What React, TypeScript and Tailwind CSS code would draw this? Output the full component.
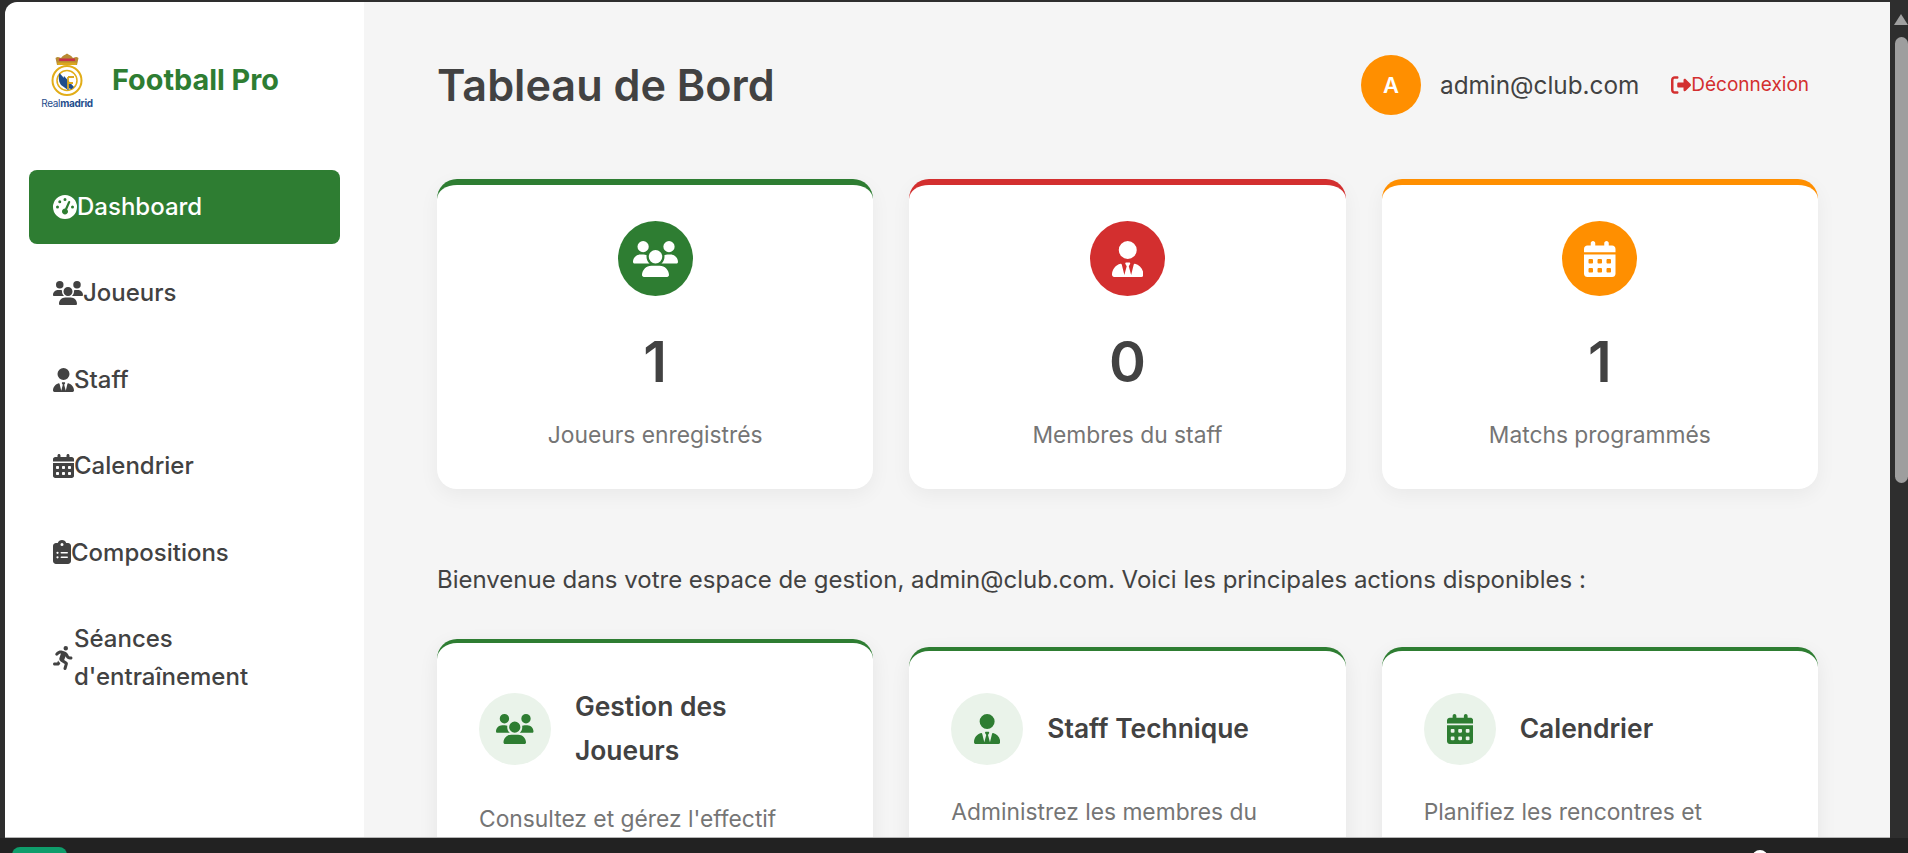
import { FaGaugeHigh, FaUsers, FaUserTie, FaCalendarDays, FaClipboardList, FaPersonRunning, FaRightFromBracket } from "react-icons/fa6";

const nav = [
  { icon: FaUsers, label: "Joueurs", size: "h-[24px] w-[30px]" },
  { icon: FaUserTie, label: "Staff", size: "h-[24px] w-[21px]" },
  { icon: FaCalendarDays, label: "Calendrier", size: "h-[24px] w-[21px]" },
  { icon: FaClipboardList, label: "Compositions", size: "h-[24px] w-[18px]" },
  { icon: FaPersonRunning, label: "Séances d'entraînement", size: "h-[24px] w-[21px]" },
];

function Crest() {
  return (
    <svg viewBox="0 0 56 44" className="h-[44px] w-[56px] shrink-0">
      <path d="M18 13 L16.5 6 C19 4 21 6 22 6 C24 3 26 3 28 1.5 C30 3 32 3 34 6 C35 6 37 4 39.5 6 L38 13 Z" fill="#b98a33" />
      <rect x="20" y="6.5" width="16" height="2.5" fill="#c8304a" />
      <rect x="18.5" y="10.5" width="19" height="2.5" fill="#dca81e" />
      <circle cx="28" cy="28.5" r="14.5" fill="#ffffff" stroke="#e2ad18" strokeWidth="2" />
      <circle cx="28" cy="28.5" r="10" fill="#ffffff" stroke="#e2ad18" strokeWidth="1.5" />
      <path d="M20.5 21 C19 26 20 30 22 33 L29 38 L32 35 L24 25 Z" fill="#1f4d8c" />
      <path d="M25 24 L35 35 L32 37.5 L24 28 Z" fill="#1f4d8c" />
      <path d="M29 25 H35 M29 25 V37 M29 31 H34" stroke="#dca81e" strokeWidth="1.8" fill="none" />
    </svg>
  );
}

function StatCard({ icon: Icon, size, value, label, border, bg }: { icon: any; size: string; value: string; label: string; border: string; bg: string }) {
  return (
    <div className={`flex h-[310px] flex-col items-center rounded-[20px] border-t-[6px] bg-white pt-[36px] shadow-[0_6px_20px_rgba(0,0,0,0.05)] ${border}`}>
      <div className={`flex h-[75px] w-[75px] items-center justify-center rounded-full text-white ${bg}`}>
        <Icon className={size} />
      </div>
      <div className="mt-[26px] text-[56px] leading-[80px] font-semibold text-[#424242]">{value}</div>
      <div className="mt-[14px] text-[22.8px] leading-[37px] text-[#757575]">{label}</div>
    </div>
  );
}

function ActionCard({ icon: Icon, size, title, text }: { icon: any; size: string; title: string; text: string }) {
  return (
    <div className="rounded-[20px] border-t-[4px] border-[#2e7d32] bg-white px-[42px] pt-[42px] pb-[42px] shadow-[0_6px_20px_rgba(0,0,0,0.07)]">
      <div className="flex items-center gap-[24px]">
        <div className="flex h-[72px] w-[72px] shrink-0 items-center justify-center rounded-full bg-[#eaf3ea] text-[#2e7d32]">
          <Icon className={size} />
        </div>
        <h3 className="text-[26.4px] leading-[43.5px] font-semibold text-[#424242]">{title}</h3>
      </div>
      <p className="mt-[28px] text-[22.8px] leading-[37px] text-[#757575]">{text}</p>
    </div>
  );
}

export default function App() {
  return (
    <div className="flex h-[853px] w-[1908px] flex-col overflow-hidden bg-[#2e2e2e] font-['Inter',sans-serif]">
      <div className="flex min-h-0 flex-1 pt-[2px] pl-[5px]">
        <div className="flex min-w-0 flex-1 overflow-hidden rounded-tl-[12px] border-b border-[#b5b5b5]">
          <aside className="flex w-[359px] shrink-0 flex-col bg-white px-[24px] shadow-[2px_0_8px_rgba(0,60,0,0.05)]">
            <div className="mt-[50px] flex items-center gap-[17px] pl-[10px]">
              <div className="flex w-[56px] flex-col items-center">
                <Crest />
                <div className="mt-[1px] text-[10px] leading-[13px] tracking-[-0.3px] text-[#1f4d8c]">
                  Real<b>madrid</b>
                </div>
              </div>
              <div className="mb-[2px] text-[28.8px] leading-[46px] font-bold text-[#2e7d32]">Football Pro</div>
            </div>
            <nav className="mt-[60px] flex flex-col gap-[12.8px]">
              <a className="flex items-center rounded-[8px] bg-[#2e7d32] px-[24px] py-[18px] text-[24px] leading-[37.6px] font-medium text-white">
                <FaGaugeHigh className="h-[24px] w-[24px] shrink-0" />
                Dashboard
              </a>
              {nav.map(({ icon: Icon, label, size }) => (
                <a key={label} className="flex items-center rounded-[8px] px-[24px] py-[18px] text-[24px] leading-[37.6px] font-medium text-[#424242]">
                  <Icon className={`shrink-0 ${size}`} />
                  <span>{label}</span>
                </a>
              ))}
            </nav>
          </aside>
          <main className="min-w-0 flex-1 overflow-hidden bg-[#f5f5f5] pr-[72px] pl-[73px]">
            <header className="mt-[53px] flex h-[60px] items-center justify-between">
              <h1 className="text-[43.2px] leading-[60px] font-semibold text-[#424242]">Tableau de Bord</h1>
              <div className="flex items-center">
                <div className="flex h-[60px] w-[60px] items-center justify-center rounded-full bg-[#ff8f00] text-[22px] font-semibold text-white">A</div>
                <span className="ml-[19px] text-[24.3px] text-[#424242]">admin@club.com</span>
                <button className="ml-[32px] flex items-center pr-[9px] text-[19px] text-[#d32f2f]">
                  <FaRightFromBracket className="h-[20px] w-[20px] shrink-0" />
                  Déconnexion
                </button>
              </div>
            </header>
            <section className="mt-[64px] grid grid-cols-3 gap-[36px]">
              <StatCard icon={FaUsers} size="h-[36px] w-[45px]" value="1" label="Joueurs enregistrés" border="border-[#2e7d32]" bg="bg-[#2e7d32]" />
              <StatCard icon={FaUserTie} size="h-[36px] w-[31.5px]" value="0" label="Membres du staff" border="border-[#d32f2f]" bg="bg-[#d32f2f]" />
              <StatCard icon={FaCalendarDays} size="h-[36px] w-[31.5px]" value="1" label="Matchs programmés" border="border-[#ff8f00]" bg="bg-[#ff8f00]" />
            </section>
            <p className="mt-[72px] text-[24px] leading-[37px] text-[#424242]">
              Bienvenue dans votre espace de gestion, admin@club.com. Voici les principales actions disponibles :
            </p>
            <section className="mt-[41px] grid grid-cols-3 items-center gap-[36px]">
              <ActionCard icon={FaUsers} size="h-[30px] w-[37.5px]" title="Gestion des Joueurs" text="Consultez et gérez l'effectif complet de votre équipe." />
              <ActionCard icon={FaUserTie} size="h-[30px] w-[26.25px]" title="Staff Technique" text="Administrez les membres du personnel de votre club." />
              <ActionCard icon={FaCalendarDays} size="h-[30px] w-[26.25px]" title="Calendrier" text="Planifiez les rencontres et entraînements de la saison." />
            </section>
          </main>
        </div>
        <div className="flex w-[18px] shrink-0 flex-col items-end bg-[#2e2e2e]">
          <svg viewBox="0 0 14 11" className="mt-[12px] h-[11px] w-[14px]"><path d="M7 0 L14 11 H0 Z" fill="#a0a0a0" /></svg>
          <div className="mt-[12px] h-[446px] w-[13px] rounded-l-full rounded-r-full bg-[#9e9e9e]" />
        </div>
      </div>
      <div className="relative h-[15px] shrink-0 bg-[#222222]">
        <div className="absolute top-[9px] left-[12px] h-[20px] w-[55px] rounded-[8px] bg-[#0f9d6b]" />
        <div className="absolute top-[12px] left-[1752px] h-[16px] w-[16px] rounded-full bg-white" />
      </div>
    </div>
  );
}
